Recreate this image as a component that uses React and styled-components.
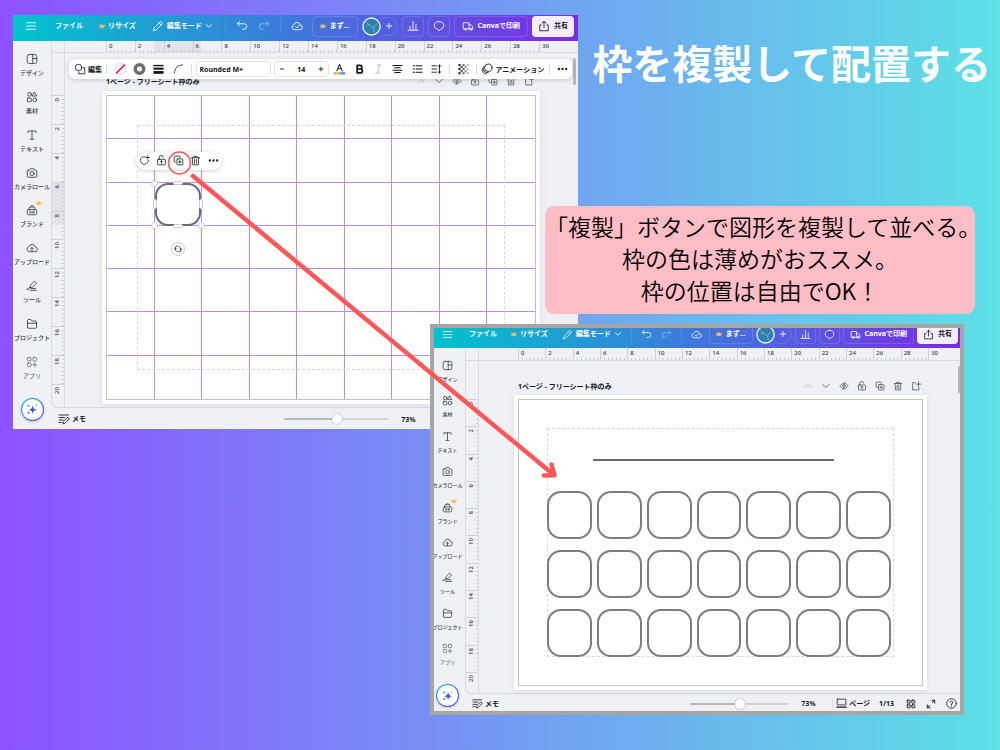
import styled, { createGlobalStyle, css, ThemeProvider } from "styled-components";

const GlobalStyle = createGlobalStyle`
  * {
    box-sizing: border-box;
  }
  body {
    margin: 0;
    font-family: "Noto Sans", "Noto Sans CJK JP", sans-serif;
    color: #12161c;
  }
  button {
    font-family: inherit;
    color: inherit;
    border: none;
    background: none;
    padding: 0;
    cursor: pointer;
  }
`;

// sizes of the two editor windows, the second one is a bit smaller
const large = {
  icon: 12,
  text: 7,
  label: 6,
  header: 26,
  headerBottom: 4,
  headerRight: 4,
  headerGap: 16,
  ruleGap: 12,
  iconGap: 10,
  actionGap: 4,
  pad: 7,
  control: 21,
  side: 38,
  sideShift: 0,
  sideBottom: 8,
  ruler: 11,
  marksLeft: 41,
  marksRight: 39,
  marksTop: 42,
  marksBottom: 23,
  pageTop: 20,
  pageRow: 18,
  pageLeft: 37,
  pageRight: 38,
  thumbRight: 2,
  footer: 21,
  slider: 104,
  percent: 37,
  footerIcon: 24,
};

const small = {
  icon: 11,
  text: 7,
  label: 5,
  header: 20,
  headerBottom: 8,
  headerRight: 2,
  headerGap: 14,
  ruleGap: 9,
  iconGap: 9,
  actionGap: 3,
  pad: 6,
  control: 20,
  side: 35,
  sideShift: -4,
  sideBottom: 4,
  ruler: 12,
  marksLeft: 39,
  marksRight: 32,
  marksTop: 38,
  marksBottom: 21,
  pageTop: 17,
  pageRow: 17,
  pageLeft: 35,
  pageRight: 33,
  thumbRight: -1,
  footer: 17,
  slider: 98,
  percent: 28,
  footerIcon: 20,
};

const cloud = <path d="M7 19.5a5 5 0 0 1-1.2-9.8A6.6 6.6 0 0 1 18.6 10a4.8 4.8 0 0 1-1.4 9.5z" />;

const shapes = {
  menu: <path d="M3 5.5h18M3 12h18M3 18.5h18" />,
  pencil: <path d="M3 21l1.6-5.6L16 4a2 2 0 0 1 2.8 0L20 5.200a2 2 0 0 1 0 2.800L8.600 19.400zM14 6l4 4" />,
  down: <path d="M4 8.500l8 7 8-7" />,
  up: <path d="M4 15.500l8-7 8 7" />,
  undo: <path d="M7 3L3 7.500 7 12M3 7.500h13a5 5 0 0 1 0 11h-3" />,
  redo: <path d="M17 3l4 4.500-4 4.500M21 7.500H8a5 5 0 0 0 0 11h3" />,
  cloudCheck: <>{cloud}<path d="M9 13.500l2.500 2.500 5-5.500" /></>,
  cloudUp: <>{cloud}<path d="M12 19v-7.500M9 14l3-3 3 3" /></>,
  crown: <path fill="currentColor" d="M2 7l5.500 4L12 4l4.500 7L22 7l-2.500 12h-15z" />,
  plus: <path d="M12 4v16M4 12h16" />,
  minus: <path d="M5 12h14" />,
  bars: <path d="M2 20.500h20M6 20V13M12 20V3M18 20V9" />,
  bubble: <path d="M12 3c5.500 0 9.500 3.300 9.500 8 0 4-3 7-7 7.800L12 22l-2.500-3.200c-4-.8-7-3.800-7-7.800 0-4.700 4-8 9.500-8z" />,
  truck: (
    <>
      <path d="M5 18H2.500V5.500H14V18H9M14 9.500h4l3.500 4V18H20M14 18h2" />
      <circle cx="7" cy="18.500" r="2" />
      <circle cx="18" cy="18.500" r="2" />
    </>
  ),
  share: <path d="M12 15V3M8 6.500L12 2.500l4 4M6.500 10H3.500v11.500h17V10h-3" />,
  design: (
    <>
      <rect x="2.500" y="3" width="19" height="18" rx="4" />
      <path d="M13.500 3v18M13.500 11h8" />
    </>
  ),
  elements: (
    <>
      <circle cx="7" cy="6.500" r="3.800" />
      <path d="M17 2.500l4.500 7.500h-9z" />
      <rect x="3" y="14" width="7.500" height="7.500" rx="1" />
      <circle cx="17.500" cy="17.700" r="3.800" />
    </>
  ),
  text: <path d="M4 7V4h16v3M12 4v16.500M8.500 20.500h7" />,
  camera: (
    <>
      <path d="M4.500 6.500H7L9 3.500h6l2 3h2.500a2 2 0 0 1 2 2v10a2 2 0 0 1-2 2h-15a2 2 0 0 1-2-2v-10a2 2 0 0 1 2-2z" />
      <circle cx="12" cy="13" r="4.200" />
    </>
  ),
  brand: (
    <>
      <rect x="2.500" y="11" width="19" height="10.500" rx="3" />
      <path d="M5 10.500a7 5 0 0 1 14 0M8 5.500a4.500 3.500 0 0 1 8 0" />
      <path d="M10.500 14.700a2 2 0 1 0 0 3M16.500 16.200a1.800 1.800 0 1 1-3.600 0 1.800 1.800 0 0 1 3.600 0" />
    </>
  ),
  tool: <path d="M8 15l1-5L16.500 2.500l4.500 4L13.500 14zM3 18.500c2-3 4-3 5-3.500M2 18.500h3M8 20.500h13M10 17h9" />,
  folder: <path d="M3 18.500V5a2 2 0 0 1 2-2h4.500l2.500 3h7a2 2 0 0 1 2 2v10.500a2 2 0 0 1-2 2H5a2 2 0 0 1-2-2zM3 10.500h18" />,
  apps: (
    <>
      <rect x="3" y="3" width="7" height="7" rx="1.500" />
      <rect x="14" y="3" width="7" height="7" rx="1.500" />
      <rect x="3" y="14" width="7" height="7" rx="1.500" />
      <path d="M17.500 13.500v8M13.500 17.500h8" />
    </>
  ),
  tiles: (
    <>
      <rect x="3" y="3" width="7" height="7" rx="1" />
      <rect x="14" y="3" width="7" height="7" rx="1" />
      <rect x="3" y="14" width="7" height="7" rx="1" />
      <rect x="14" y="14" width="7" height="7" rx="1" />
    </>
  ),
  sparkle: (
    <>
      <path fill="currentColor" stroke="none" d="M13.500 4c.8 6.500 2.500 8.500 9 9.500-6.500 1-8.200 3-9 9.500-.8-6.500-2.500-8.500-9-9.500 6.500-1 8.200-3 9-9.500z" />
      <circle cx="5" cy="5.500" r="2.200" fill="#18b3c9" stroke="none" />
      <circle cx="20.500" cy="4.500" r="1.500" fill="#7d7ae8" stroke="none" />
      <circle cx="5" cy="19.500" r="1.900" fill="currentColor" stroke="none" />
    </>
  ),
  eye: <path d="M8 17.500C4 16 2 12 2 12s3.500-6 9.500-6M16 6.500c4 1.500 6 5.500 6 5.500s-3.500 6-9.500 6M14 3l-4 18M9.500 9.500a3.500 3.500 0 0 0 0 5M14.500 9.500a3.500 3.500 0 0 1 0 5" />,
  lock: (
    <>
      <rect x="3.500" y="9.500" width="17" height="12" rx="1.500" />
      <path d="M7 9.500V6a4.500 4.500 0 0 1 9-1M12 19v-6M9.500 14.500l2.500-2 2.500 2" />
    </>
  ),
  copy: (
    <>
      <rect x="8.500" y="8.500" width="13" height="13" rx="2" />
      <path d="M5.500 15.500h-1a2 2 0 0 1-2-2v-9a2 2 0 0 1 2-2h9a2 2 0 0 1 2 2v1M15 12v6M12 15h6" />
    </>
  ),
  trash: <path d="M3 6h18M8.500 6V3h7v3M5 6l1 15.500h12L19 6M10 10v8M14 10v8" />,
  addPage: <path d="M10 4H4v17.500h15V15M18 2v11M12.500 7.500h11" />,
  dots: (
    <g fill="currentColor" stroke="none">
      <circle cx="4" cy="12" r="2.500" />
      <circle cx="12" cy="12" r="2.500" />
      <circle cx="20" cy="12" r="2.500" />
    </g>
  ),
  comment: <path d="M13 4c-6-1-10 2.500-10 7.500 0 4 2.500 6.500 6 7.500l2.500 3 2.500-3c4-.8 7-3.500 6.800-7.500M19 2v7M15.500 5.500h7" />,
  rotate: <path d="M10 4H6.500A3 3 0 0 0 4 7v7M1.500 11.500L4 14l2.500-2.500M14 20h3.500a3 3 0 0 0 3-3v-7M18 12.500l2.500-2.500 2.500 2.500M9 20c-1.500-.5-2.500-1.500-3-3M15 4c1.500.5 2.500 1.500 3 3" />,
  shape: (
    <>
      <circle cx="9" cy="9" r="6.500" />
      <path d="M18 9.500h3.500v12h-12V18" />
    </>
  ),
  noFill: (
    <>
      <circle cx="12" cy="12" r="11" fill="#f3f4f6" stroke="#c9ccd3" strokeWidth="1.500" strokeDasharray="4 2" />
      <path d="M4 20L20 4" stroke="#e1193f" strokeWidth="3" />
    </>
  ),
  ring: <circle cx="12" cy="12" r="8.500" stroke="#6d6d6d" strokeWidth="7" />,
  lines: (
    <g fill="currentColor" stroke="none">
      <rect x="1" y="3" width="22" height="3" />
      <rect x="1" y="9" width="22" height="4.500" />
      <rect x="1" y="16.500" width="22" height="6" />
    </g>
  ),
  corner: <path d="M3 21C4 10 9 4 21 3" />,
  letter: (
    <>
      <path d="M6 16l6-14 6 14M8.500 11.500h7" strokeWidth="2.200" />
      <rect x="0" y="19" width="24" height="5" fill="url(#rainbow)" stroke="none" />
      <linearGradient id="rainbow">
        <stop offset="0" stopColor="#ff7a3c" />
        <stop offset=".3" stopColor="#ffd43b" />
        <stop offset=".55" stopColor="#33cf6e" />
        <stop offset=".8" stopColor="#3f8cff" />
        <stop offset="1" stopColor="#9a4dff" />
      </linearGradient>
    </>
  ),
  bold: <path strokeWidth="3.800" d="M7 4h6a4 4 0 0 1 0 8H7zM7 12h7a4 4 0 0 1 0 8.500H7z" />,
  italic: <path d="M10 3.500h8M6 20.500h8M14 3.500l-4 17" />,
  center: <path strokeWidth="2.200" d="M2 4.500h20M6 9.500h12M2 14.500h20M6 19.500h12" />,
  list: <path strokeWidth="2.200" d="M9 5h13M9 12h13M9 19h13M2.500 5h3M2.500 12h3M2.500 19h3" />,
  spacing: <path strokeWidth="2" d="M2 5h10M2 12h10M2 19h10M18.500 3v18M16 6l2.500-3L21 6M16 18l2.500 3 2.500-3" />,
  checker: (
    <g fill="currentColor" stroke="none">
      {[0, 1, 2, 3, 4].map((row) =>
        [0, 1, 2, 3, 4]
          .filter((col) => (row + col) % 2 === 0)
          .map((col) => <rect key={`${row}${col}`} x={1 + col * 4.5} y={1 + row * 4.5} width="4.500" height="4.500" opacity={1 - col * 0.18} />)
      )}
    </g>
  ),
  motion: (
    <>
      <circle cx="14.500" cy="9.500" r="7.500" />
      <path d="M5.500 7a8 8 0 0 0 9 12M3 11.500a7.500 7.500 0 0 0 7.500 10.500" />
    </>
  ),
  memo: <path d="M2 4h19M2 9h11M2 14h8M2 19h5M10 21l1-4.500L19 8.500l3.500 3L14.500 20z" />,
  pages: (
    <>
      <rect x="2.500" y="2.500" width="19" height="12.500" rx="1" />
      <path strokeWidth="3" d="M2 20h5M9.500 20h5M17 20h5" />
    </>
  ),
  expand: <path d="M14 3h7v7M21 3l-6 6M10 21H3v-7M3 21l6-6" />,
  help: (
    <>
      <circle cx="12" cy="12" r="10.500" />
      <path d="M9 9.500a3 3 0 1 1 3 3.200v1.800M12 17v1.500" />
    </>
  ),
};

function Icon({ name, className }) {
  return (
    <IconStyled className={className} viewBox="0 0 24 24" aria-hidden="true">
      {shapes[name]}
    </IconStyled>
  );
}

const IconStyled = styled.svg`
  display: block;
  flex: none;
  width: ${({ theme }) => theme.icon}px;
  height: ${({ theme }) => theme.icon}px;
  overflow: visible;
  fill: none;
  stroke: currentColor;
  stroke-width: 1.7;
  stroke-linecap: round;
  stroke-linejoin: round;
`;

const SmallIcon = styled(Icon)`
  width: 8px;
  height: 8px;
  stroke-width: 2.6;
`;

const Crown = styled(Icon)`
  width: 6px;
  height: 6px;
  color: #fdbc5c;
`;

/* ---------- header ---------- */

function Header() {
  return (
    <HeaderStyled>
      <HeaderGroup>
        <HeaderTexts>
          <MenuButton aria-label="メニュー"><Icon name="menu" /></MenuButton>
          <HeaderButton>ファイル</HeaderButton>
          <HeaderButton><Crown name="crown" />リサイズ</HeaderButton>
          <HeaderButton><Icon name="pencil" />編集モード<SmallIcon name="down" /></HeaderButton>
        </HeaderTexts>
        <HeaderIcons>
          <HeaderRule />
          <HeaderButton aria-label="元に戻す"><Icon name="undo" /></HeaderButton>
          <HeaderButton aria-label="やり直す" $faded><Icon name="redo" /></HeaderButton>
          <HeaderRule />
          <HeaderButton aria-label="保存済み"><Icon name="cloudCheck" /></HeaderButton>
        </HeaderIcons>
      </HeaderGroup>
      <HeaderActions>
        <OutlineButton><Crown name="crown" />まず...</OutlineButton>
        <People>
          <Avatar viewBox="0 0 20 20" aria-hidden="true">
            <circle cx="10" cy="10" r="9" fill="#2f7fae" stroke="#dff1ff" strokeWidth="1.500" />
            <path d="M4 4c3 5 5 6 8 7l1 5M12 11l4-4M8 8l-3 1" fill="none" stroke="#74b8cf" strokeWidth="1" />
          </Avatar>
          <AddButton aria-label="メンバーを追加"><SmallIcon name="plus" /></AddButton>
        </People>
        <SquareButton aria-label="分析"><Icon name="bars" /></SquareButton>
        <SquareButton aria-label="コメント"><Icon name="bubble" /></SquareButton>
        <OutlineButton><Icon name="truck" />Canvaで印刷</OutlineButton>
        <ShareButton><Icon name="share" />共有</ShareButton>
      </HeaderActions>
    </HeaderStyled>
  );
}

const HeaderStyled = styled.header`
  display: flex;
  align-items: center;
  justify-content: space-between;
  height: ${({ theme }) => theme.header}px;
  padding: 0 ${({ theme }) => theme.headerRight}px ${({ theme }) => theme.headerBottom}px 12px;
  margin-left: ${({ theme }) => theme.sideShift}px;
  background: linear-gradient(90deg, #00c4cc, #3c7bdb 48%, #7d2ae8);
  color: #fff;
`;

const HeaderGroup = styled.div`
  display: flex;
  align-items: center;
  gap: ${({ theme }) => theme.ruleGap}px;
`;

const HeaderTexts = styled(HeaderGroup)`
  gap: ${({ theme }) => theme.headerGap}px;
`;

const HeaderIcons = styled(HeaderGroup)`
  gap: ${({ theme }) => theme.iconGap}px;
`;

const HeaderActions = styled(HeaderGroup)`
  gap: ${({ theme }) => theme.actionGap}px;
`;

const HeaderButton = styled.button`
  display: flex;
  align-items: center;
  gap: 3px;
  font-size: ${({ theme }) => theme.text}px;
  font-weight: 700;
  line-height: 12px;
  white-space: nowrap;
  opacity: ${({ $faded }) => ($faded ? 0.45 : 1)};
`;

const MenuButton = styled(HeaderButton)`
  padding-right: 2px;
`;

const HeaderRule = styled.span`
  width: 1px;
  height: 16px;
  background: rgba(255, 255, 255, 0.12);
`;

const OutlineButton = styled(HeaderButton)`
  gap: 4px;
  height: ${({ theme }) => theme.control}px;
  padding: 0 ${({ theme }) => theme.pad}px;
  border: 1px solid rgba(255, 255, 255, 0.14);
  border-radius: 4px;
`;

const SquareButton = styled(OutlineButton)`
  padding: 0 4px;
`;

const ShareButton = styled(OutlineButton)`
  padding: 0 5px;
  background: #f4edfd;
  color: #12161c;
`;

const People = styled.div`
  display: flex;
  align-items: center;
`;

const Avatar = styled.svg`
  width: 19px;
  height: 19px;
`;

const AddButton = styled.button`
  display: grid;
  place-items: center;
  width: 17px;
  height: 19px;
  border: 1px solid rgba(255, 255, 255, 0.14);
  border-left: none;
  border-radius: 0 10px 10px 0;
`;

/* ---------- sidebar ---------- */

const tools = [
  { icon: "design", label: "デザイン" },
  { icon: "elements", label: "素材" },
  { icon: "text", label: "テキスト" },
  { icon: "camera", label: "カメラロール" },
  { icon: "brand", label: "ブランド", pro: true },
  { icon: "cloudUp", label: "アップロード" },
  { icon: "tool", label: "ツール" },
  { icon: "folder", label: "プロジェクト" },
  { icon: "apps", label: "アプリ" },
];

function Sidebar() {
  return (
    <SidebarStyled>
      <nav>
        {tools.map(({ icon, label, pro }) => (
          <SideButton key={label}>
            <Icon name={icon} />
            {pro && <ProBadge name="crown" />}
            <span>{label}</span>
          </SideButton>
        ))}
      </nav>
      <MagicButton aria-label="マジック"><Icon name="sparkle" /></MagicButton>
    </SidebarStyled>
  );
}

const SidebarStyled = styled.aside`
  display: flex;
  flex: none;
  flex-direction: column;
  align-items: center;
  gap: 18px;
  width: ${({ theme }) => theme.side}px;
  margin-left: ${({ theme }) => theme.sideShift}px;
  padding: 12px 0 ${({ theme }) => theme.sideBottom}px;

  nav {
    flex: 1;
    display: flex;
    flex-direction: column;
    justify-content: space-between;
  }
`;

const SideButton = styled.button`
  position: relative;
  display: flex;
  flex-direction: column;
  align-items: center;
  gap: 4px;
  color: #363b45;
  font-size: ${({ theme }) => theme.label}px;
  font-weight: 500;
  line-height: 8px;
  white-space: nowrap;

  &:last-child {
    color: #6c717a;
  }
`;

const ProBadge = styled(Crown)`
  position: absolute;
  top: -4px;
  left: calc(50% + 4px);
`;

const MagicButton = styled.button`
  display: grid;
  flex: none;
  place-items: center;
  width: 23px;
  height: 23px;
  border: 1px solid transparent;
  border-radius: 50%;
  color: #3a5bd9;
  background: linear-gradient(#fff, #fff) padding-box, linear-gradient(135deg, #00c4cc, #6a35e0) border-box;
  box-shadow: 0 1px 3px rgba(40, 50, 90, 0.2);
`;

/* ---------- rulers ---------- */

const horizontalMarks = Array.from({ length: 16 }, (_, i) => i * 2);
const verticalMarks = Array.from({ length: 11 }, (_, i) => i * 2);

function Ruler({ vertical, selected }) {
  const Bar = vertical ? VerticalBar : HorizontalBar;
  const Mark = vertical ? VerticalMark : HorizontalMark;
  const marks = vertical ? verticalMarks : horizontalMarks;
  return (
    <Bar>
      <div className="marks">
        {selected && <span className="range" />}
        {marks.map((mark) => (
          <Mark key={mark}><span>{mark}</span></Mark>
        ))}
      </div>
    </Bar>
  );
}

const HorizontalBar = styled.div`
  height: ${({ theme }) => theme.ruler}px;
  margin-left: 12px;
  padding: 0 ${({ theme }) => theme.marksRight}px 0 ${({ theme }) => theme.marksLeft}px;
  border-left: 1px solid #d9dbe1;

  .marks {
    position: relative;
    display: grid;
    grid-template-columns: repeat(15, minmax(0, 1fr)) 0;
    height: 100%;
  }

  .range {
    position: absolute;
    left: 11%;
    width: 11%;
    height: 100%;
    background: #e3e4ea;
  }
`;

const HorizontalMark = styled.div`
  position: relative;
  height: 100%;
  padding-left: 2px;
  border-left: 1px solid #cfd2d9;
  font-size: 6px;
  font-weight: 500;
  line-height: 11px;
  color: #3b404a;

  &::after {
    content: "";
    position: absolute;
    right: 0;
    bottom: 0;
    left: 0;
    height: 2px;
    background: repeating-linear-gradient(90deg, transparent 0 3px, #c9ccd4 3px 4px);
  }
`;

const VerticalBar = styled.div`
  flex: none;
  width: 13px;
  padding: ${({ theme }) => theme.marksTop}px 0 ${({ theme }) => theme.marksBottom}px;
  border-right: 1px solid #d9dbe1;

  .marks {
    position: relative;
    display: grid;
    grid-template-rows: repeat(10, minmax(0, 1fr)) 0;
    height: 100%;
  }

  .range {
    position: absolute;
    top: 30%;
    width: 100%;
    height: 15%;
    background: #e3e4ea;
  }
`;

const VerticalMark = styled.div`
  position: relative;
  border-top: 1px solid #cfd2d9;
  font-size: 6px;
  font-weight: 500;
  line-height: 10px;
  color: #3b404a;

  span {
    display: block;
    padding-bottom: 2px;
    writing-mode: vertical-rl;
    transform: rotate(180deg);
  }

  &::after {
    content: "";
    position: absolute;
    top: 0;
    right: 0;
    bottom: 0;
    width: 2px;
    background: repeating-linear-gradient(transparent 0 3px, #c9ccd4 3px 4px);
  }
`;

/* ---------- shape toolbar ---------- */

const fillTools = [
  ["noFill", "塗りつぶし"],
  ["ring", "線の色"],
  ["lines", "線の太さ"],
  ["corner", "角の丸み"],
];
const textTools = [
  ["letter", "文字の色"],
  ["bold", "太字"],
  ["italic", "斜体"],
  ["center", "配置"],
  ["list", "リスト"],
  ["spacing", "間隔"],
];

function Toolbar() {
  return (
    <ToolbarStyled>
      <TextTool><Icon name="shape" />編集</TextTool>
      <Divider />
      {fillTools.map(([icon, label]) => (
        <IconTool key={icon} aria-label={label}><Icon name={icon} /></IconTool>
      ))}
      <Divider />
      <FontInput aria-label="フォント" defaultValue="Rounded M+" />
      <Stepper>
        <button aria-label="小さく"><StepIcon name="minus" /></button>
        <input aria-label="文字サイズ" defaultValue="14" />
        <button aria-label="大きく"><StepIcon name="plus" /></button>
      </Stepper>
      {textTools.map(([icon, label]) => (
        <IconTool key={icon} aria-label={label} $faded={icon === "italic"}><Icon name={icon} /></IconTool>
      ))}
      <Divider />
      <IconTool aria-label="透明度"><Icon name="checker" /></IconTool>
      <Divider />
      <TextTool><Icon name="motion" />アニメーション</TextTool>
      <Divider />
      <IconTool aria-label="その他"><Icon name="dots" /></IconTool>
    </ToolbarStyled>
  );
}

const ToolbarStyled = styled.div`
  position: absolute;
  top: 6px;
  right: 6px;
  left: 17px;
  z-index: 1;
  display: flex;
  align-items: center;
  justify-content: space-between;
  height: 20px;
  padding-left: 4px;
  border-radius: 6px;
  background: #fff;
  box-shadow: 0 1px 4px rgba(50, 60, 90, 0.22);
`;

const TextTool = styled.button`
  display: flex;
  align-items: center;
  gap: 2px;
  font-size: 7px;
  font-weight: 700;
  white-space: nowrap;
  padding: 0 1px;
`;

const IconTool = styled.button`
  display: grid;
  place-items: center;
  width: 19px;
  height: 20px;
  color: ${({ $faded }) => ($faded ? "#a9adb5" : "inherit")};

  svg {
    width: ${({ children }) => (["noFill", "ring"].includes(children.props.name) ? 13 : 11)}px;
  }
`;

const Divider = styled.span`
  width: 1px;
  height: 9px;
  margin: 0 3px;
  background: #d5d8de;
`;

const field = css`
  height: 16px;
  border: 1px solid #e0e2e8;
  border-radius: 4px;
  background: #fff;
`;

const FontInput = styled.input`
  ${field}
  width: 75px;
  padding: 0 3px;
  font: 700 7px "Noto Sans", sans-serif;
  color: #12161c;
`;

const Stepper = styled.div`
  ${field}
  display: flex;
  align-items: center;
  justify-content: space-between;
  width: 55px;
  margin: 0 1px 0 3px;
  padding: 0 4px;

  input {
    width: 20px;
    padding: 0;
    border: none;
    text-align: center;
    font: 700 7px "Noto Sans", sans-serif;
    color: #12161c;
  }
`;

const StepIcon = styled(Icon)`
  width: 6px;
  height: 6px;
  stroke-width: 3.4;
`;

/* ---------- page ---------- */

const pageTools = [
  ["up", "上へ移動"],
  ["down", "下へ移動"],
  ["eye", "ページを非表示"],
  ["lock", "ロック"],
  ["copy", "ページを複製"],
  ["trash", "ページを削除"],
  ["addPage", "ページを追加"],
];

function Page({ children }) {
  return (
    <PageArea>
      <PageBar>
        <h2>1ページ - フリーシート枠のみ</h2>
        <PageTools>
          {pageTools.map(([icon, label]) => (
            <PageTool key={icon} aria-label={label} $faded={icon === "up"}><PageIcon name={icon} /></PageTool>
          ))}
        </PageTools>
      </PageBar>
      <Sheet>
        <Frame>{children}</Frame>
      </Sheet>
    </PageArea>
  );
}

const PageArea = styled.div`
  flex: 1;
  min-width: 0;
  padding: ${({ theme }) => `${theme.pageTop}px ${theme.pageRight}px 3px ${theme.pageLeft}px`};
`;

const PageBar = styled.div`
  display: flex;
  align-items: center;
  justify-content: space-between;
  height: ${({ theme }) => theme.pageRow}px;
  padding: 0 6px 2px 4px;

  h2 {
    margin: 0;
    font-size: 7px;
    font-weight: 700;
    white-space: nowrap;
  }
`;

const PageTools = styled.div`
  display: flex;
`;

const PageTool = styled.button`
  padding: 0 4px;
  color: #3d424c;
  opacity: ${({ $faded }) => ($faded ? 0.4 : 1)};

  &:last-child {
    padding-right: 0;
  }
`;

const PageIcon = styled(Icon)`
  width: 10px;
  height: 10px;
`;

const Sheet = styled.div`
  display: flex;
  aspect-ratio: 7 / 5;
  padding: 4px;
  background: #fff;
  box-shadow: 0 1px 5px rgba(60, 70, 100, 0.12);
`;

const Frame = styled.div`
  position: relative;
  flex: 1;
  display: grid;
  border: 1px solid #bfc1c6;
`;

const dashed = css`
  border: 1px dashed #d9dadd;
`;

/* ---------- guide page ---------- */

const guideCells = Array.from({ length: 63 }, (_, i) => i);
const selectedCell = 19;

const shapeActions = [
  ["comment", "コメントを追加"],
  ["lock", "ロック"],
  ["copy", "複製"],
  ["trash", "削除"],
  ["dots", "その他"],
];

function GuidePage() {
  return (
    <Page>
      <GuideGrid>
        {guideCells.map((cell) => (
          <GuideCell key={cell} $last={cell % 9 === 8} $bottom={cell >= 54}>
            {cell === selectedCell && <SelectedShape />}
          </GuideCell>
        ))}
      </GuideGrid>
      <PrintMargin />
    </Page>
  );
}

function SelectedShape() {
  return (
    <Selection>
      <ShapeMenu>
        {shapeActions.map(([icon, label]) => (
          <button key={icon} aria-label={label}><ShapeIcon name={icon} /></button>
        ))}
      </ShapeMenu>
      {["nw", "ne", "sw", "se"].map((corner) => (
        <Knob key={corner} $corner={corner} />
      ))}
      {["n", "s", "w", "e"].map((side) => (
        <Grip key={side} $side={side} />
      ))}
      <RotateButton aria-label="回転"><ShapeIcon name="rotate" /></RotateButton>
    </Selection>
  );
}

const GuideGrid = styled.div`
  display: grid;
  grid-template-columns: repeat(9, minmax(0, 1fr));
  grid-template-rows: repeat(7, minmax(0, 1fr));
`;

const GuideCell = styled.div`
  position: relative;
  border: 0 solid #b48cff;
  border-right-width: ${({ $last }) => ($last ? 0 : 1)}px;
  border-bottom-width: ${({ $bottom }) => ($bottom ? 0 : 1)}px;
`;

const PrintMargin = styled.div`
  ${dashed}
  position: absolute;
  inset: 29px 30px;
`;

const Selection = styled.div`
  position: absolute;
  inset: 0 0 -1px;
  z-index: 1;
  border: 2px solid #6b6b6b;
  border-radius: 13px;
  background: #fff;
`;

const ShapeMenu = styled.div`
  position: absolute;
  bottom: calc(100% + 15px);
  left: 50%;
  display: flex;
  align-items: center;
  justify-content: space-around;
  width: 86px;
  height: 18px;
  margin-left: -42px;
  border-radius: 9px;
  background: #fff;
  box-shadow: 0 1px 4px rgba(50, 60, 90, 0.22);
`;

const ShapeIcon = styled(Icon)`
  width: 11px;
  height: 11px;
`;

const Knob = styled.span`
  position: absolute;
  width: 7px;
  height: 7px;
  border: 1px solid #c9c3dc;
  border-radius: 50%;
  background: #fff;
  ${({ $corner }) => ($corner[0] === "n" ? "top: -5px;" : "bottom: -5px;")}
  ${({ $corner }) => ($corner[1] === "w" ? "left: -6px;" : "right: -6px;")}
`;

const gripSides = {
  n: "top: -4px; left: calc(50% - 5px);",
  s: "bottom: -4px; left: calc(50% - 5px);",
  w: "left: -4px; top: calc(50% - 5px);",
  e: "right: -4px; top: calc(50% - 5px);",
};

const Grip = styled.span`
  position: absolute;
  width: ${({ $side }) => ("ns".includes($side) ? 10 : 4)}px;
  height: ${({ $side }) => ("ns".includes($side) ? 4 : 10)}px;
  border: 1px solid #cfcad9;
  border-radius: 2px;
  background: #fff;
  ${({ $side }) => gripSides[$side]}
`;

const RotateButton = styled.button`
  position: absolute;
  top: calc(100% + 18px);
  left: calc(50% - 7px);
  display: grid;
  place-items: center;
  width: 14px;
  height: 14px;
  border: 1px solid #c9ccd3;
  border-radius: 50%;
  background: #fff;

  svg {
    width: 8px;
    height: 8px;
    stroke-width: 2.4;
  }
`;

/* ---------- finished page ---------- */

function BoxesPage() {
  return (
    <Page>
      <Boxes>
        <hr />
        <BoxGrid>
          {Array.from({ length: 21 }, (_, i) => (
            <Box key={i} />
          ))}
        </BoxGrid>
      </Boxes>
    </Page>
  );
}

const Boxes = styled.div`
  ${dashed}
  display: flex;
  flex-direction: column;
  justify-content: space-between;
  margin: 28px;

  hr {
    width: 70%;
    height: 2px;
    margin: 30px 0 0 13%;
    border: none;
    background: #6b6b6b;
  }
`;

const BoxGrid = styled.div`
  display: grid;
  grid-template-columns: repeat(7, minmax(0, 1fr));
  gap: 11px 5px;
  margin: 0 2px -1px -1px;
`;

const Box = styled.div`
  height: 48px;
  border: 2px solid #7d7d7d;
  border-radius: 14px;
`;

/* ---------- footer ---------- */

function Footer() {
  return (
    <FooterStyled>
      <FooterButton><Icon name="memo" />メモ</FooterButton>
      <FooterRight>
        <Zoom type="range" aria-label="ズーム" defaultValue="51" />
        <Percent>73%</Percent>
        <Divider />
        <FooterButton><Icon name="pages" />ページ</FooterButton>
        <PageCount>1/13</PageCount>
        <FooterIcon aria-label="グリッドビュー"><FooterGlyph name="tiles" /></FooterIcon>
        <FooterIcon aria-label="全画面"><FooterGlyph name="expand" /></FooterIcon>
        <HelpButton aria-label="ヘルプ"><Icon name="help" /></HelpButton>
      </FooterRight>
    </FooterStyled>
  );
}

const FooterStyled = styled.footer`
  display: flex;
  align-items: center;
  justify-content: space-between;
  height: ${({ theme }) => theme.footer}px;
  padding: 2px 1px 0 7px;
`;

const FooterButton = styled.button`
  display: flex;
  align-items: center;
  gap: 2px;
  font-size: 7px;
  font-weight: 700;
  line-height: 12px;
  white-space: nowrap;
`;

const FooterRight = styled.div`
  display: flex;
  align-items: center;
`;

const Zoom = styled.input`
  appearance: none;
  width: ${({ theme }) => theme.slider}px;
  height: 12px;
  margin: 0 13px 0 0;
  background: linear-gradient(90deg, #b3b9c4 51%, #d0d3dc 51%) center / 100% 2px no-repeat;

  &::-webkit-slider-thumb {
    appearance: none;
    width: 10px;
    height: 10px;
    border-radius: 50%;
    background: #fff;
    box-shadow: 0 0 2px rgba(40, 50, 80, 0.45);
  }
`;

const Percent = styled.span`
  width: ${({ theme }) => theme.percent}px;
  font-size: 7px;
  font-weight: 700;
`;

const PageCount = styled.span`
  margin: 0 7px 0 9px;
  font-size: 7px;
  font-weight: 700;
`;

const FooterIcon = styled.button`
  display: grid;
  place-items: center;
  width: ${({ theme }) => theme.footerIcon}px;
  height: 12px;
`;

const HelpButton = styled(FooterIcon)`
  width: 16px;
  margin-left: 2px;
`;

const FooterGlyph = styled(Icon)`
  width: 10px;
  height: 10px;
  stroke-width: 2.2;
`;

/* ---------- editor window ---------- */

function Editor({ sizes, editing, children }) {
  return (
    <ThemeProvider theme={sizes}>
      <Header />
      <Body>
        <Sidebar />
        <Work>
          <Desk>
            <Ruler selected={editing} />
            <DeskRow>
              {editing && <Toolbar />}
              <Ruler vertical selected={editing} />
              {children}
              <ScrollThumb />
            </DeskRow>
          </Desk>
          <Footer />
        </Work>
      </Body>
    </ThemeProvider>
  );
}

const Body = styled.div`
  display: flex;
`;

const Work = styled.div`
  flex: 1;
  min-width: 0;
`;

const Desk = styled.div`
  border: 0 solid #d9dbe1;
  border-width: 0 0 1px 1px;
  border-bottom-left-radius: 6px;
`;

const DeskRow = styled.div`
  position: relative;
  display: flex;
  border-top: 1px solid #d9dbe1;
`;

const ScrollThumb = styled.span`
  position: absolute;
  top: 5px;
  right: ${({ theme }) => theme.thumbRight}px;
  width: 3px;
  height: 27px;
  border-radius: 2px;
  background: #b4b7bf;
`;

/* ---------- slide ---------- */

export default function App() {
  return (
    <>
      <GlobalStyle />
      <Slide>
        <Title>枠を複製して配置する</Title>
        <FirstWindow>
          <Editor sizes={large} editing>
            <GuidePage />
          </Editor>
        </FirstWindow>
        <SecondWindow>
          <Editor sizes={small}>
            <BoxesPage />
          </Editor>
        </SecondWindow>
        <Note>
          「複製」ボタンで図形を複製して並べる。
          <br />
          枠の色は薄めがおススメ。
          <br />
          枠の位置は自由でOK！
        </Note>
        <Pointer viewBox="0 0 1000 750" aria-hidden="true">
          <circle cx="179.500" cy="163" r="11" strokeWidth="1.500" />
          <path strokeWidth="4.500" d="M193 176L554 475M551.500 464.500L554.500 475.200L544 475.500" />
        </Pointer>
      </Slide>
    </>
  );
}

const Slide = styled.main`
  position: relative;
  display: flex;
  flex-direction: column;
  align-items: flex-end;
  min-height: 100vh;
  overflow: hidden;
  background: linear-gradient(90deg, #8c52ff, #5ce1e6);
`;

const Title = styled.h1`
  margin: 32px 9px 0 0;
  color: #fff;
  font: 700 40px/60px "Noto Sans CJK JP", sans-serif;
  white-space: nowrap;
`;

const Note = styled.p`
  position: relative;
  width: 43%;
  margin: 114px 25px 0 0;
  padding: 4px 0 8px;
  border-radius: 9px;
  background: #ffbdc5;
  color: #000;
  text-align: center;
  font: 350 23px/32px "Noto Sans CJK JP", sans-serif;
  white-space: nowrap;
`;

const WindowFrame = styled.section`
  position: absolute;
  overflow: hidden;
  isolation: isolate;
  background: #f0f1f5;
`;

const FirstWindow = styled(WindowFrame)`
  top: 15px;
  left: 1.3%;
  width: 56.5%;
`;

const SecondWindow = styled(WindowFrame)`
  top: 324px;
  left: 43%;
  width: 53.4%;
  border: 4px solid #a6a6a6;
`;

const Pointer = styled.svg`
  position: absolute;
  top: 0;
  left: 0;
  width: 100%;
  fill: none;
  stroke: #ff5757;
  stroke-linecap: round;
  stroke-linejoin: round;
  pointer-events: none;
`;
